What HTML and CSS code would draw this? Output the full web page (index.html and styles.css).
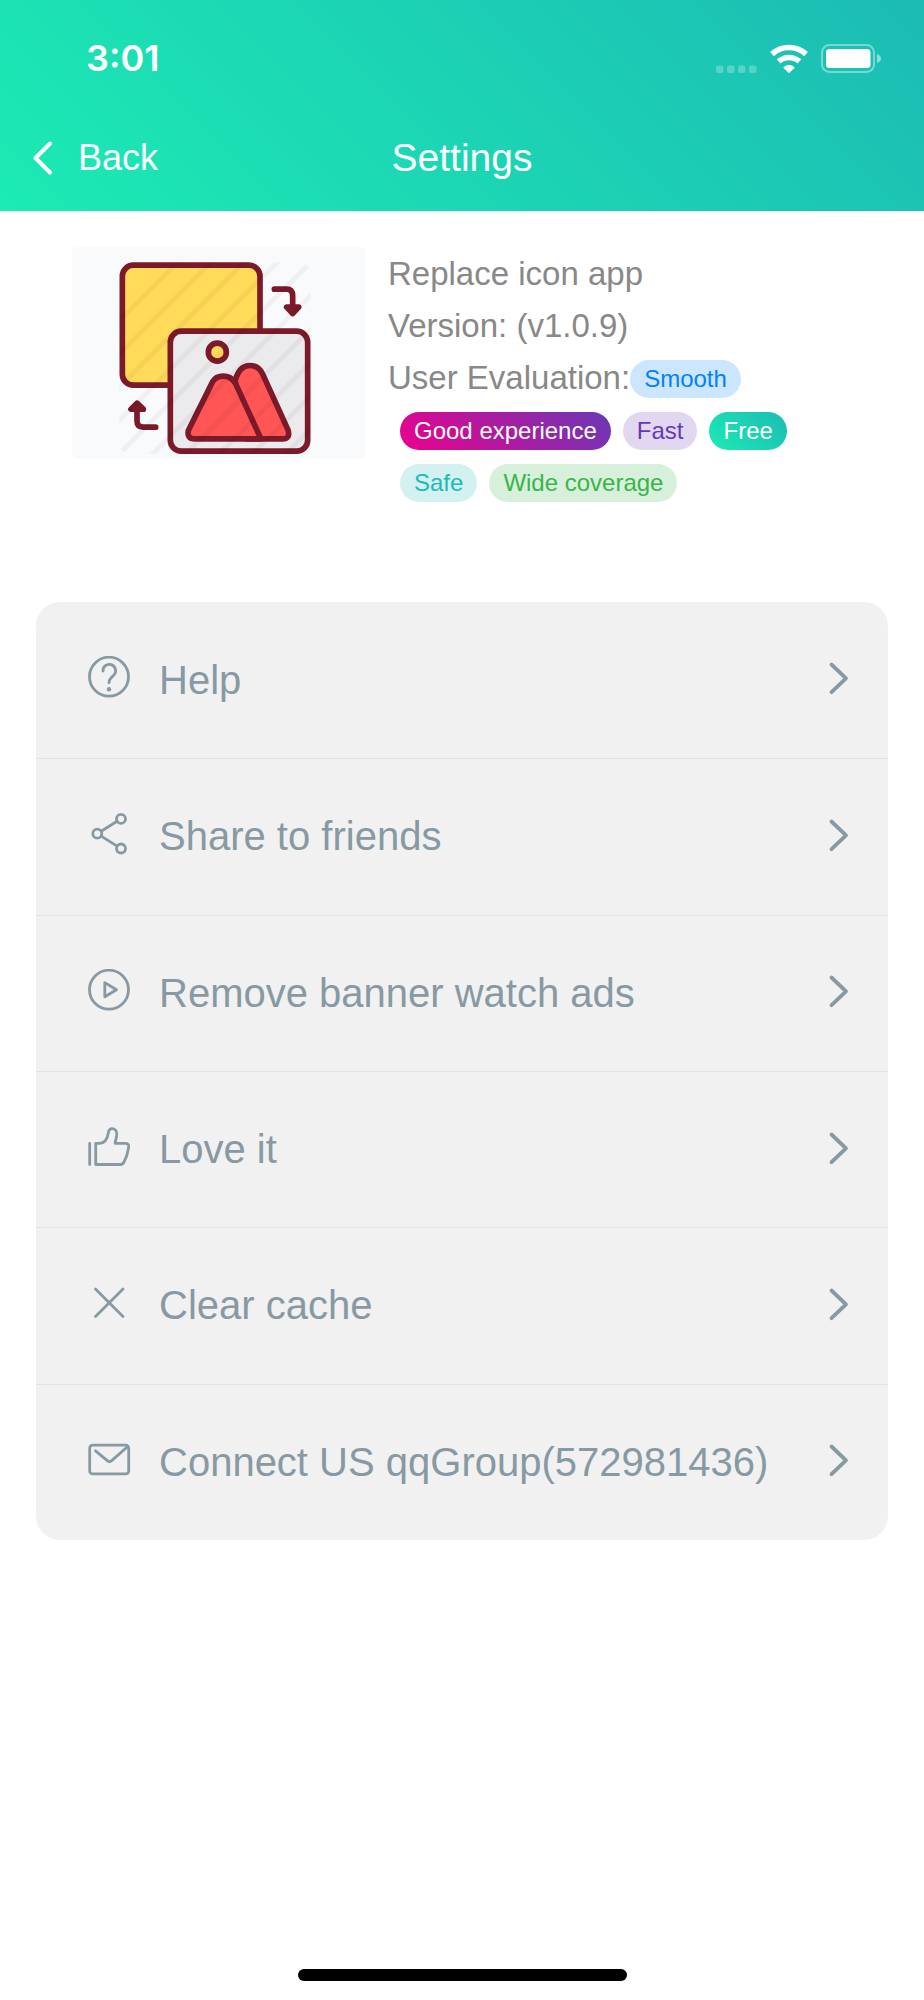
FILE: index.html
```html
<!DOCTYPE html>
<html lang="en">
<head>
<meta charset="utf-8">
<meta name="viewport" content="width=device-width, initial-scale=1">
<title>Settings</title>
<link rel="stylesheet" href="styles.css">
</head>
<body>
<div class="screen">
  <header class="header">
    <div class="status">
      <span class="time">3:01</span>
      <div class="indicators">
        <svg class="signal" width="42" height="29" viewBox="0 0 42 29" aria-hidden="true">
          <g fill="#fff" fill-opacity=".25"><rect x="0" y="21.5" width="7.5" height="7.5" rx="2"/><rect x="11" y="21.5" width="7.5" height="7.5" rx="2"/><rect x="22" y="21.5" width="7.5" height="7.5" rx="2"/><rect x="33" y="21.5" width="7.5" height="7.5" rx="2"/></g>
        </svg>
        <svg class="wifi" width="38" height="29" viewBox="0 0 38 29" aria-hidden="true">
          <path d="M2 10.1A25.4 25.4 0 0 1 36 10.1M8.6 17.4A15.6 15.6 0 0 1 29.4 17.4" fill="none" stroke="#fff" stroke-width="5.6"/>
          <path d="M18.2 28.4L13.2 23.4Q19 18.2 24.8 23.4L19.8 28.4Q19 29.2 18.2 28.4Z" fill="#fff"/>
        </svg>
        <svg class="battery" width="60" height="29" viewBox="0 0 60 29" aria-hidden="true">
          <rect x="1" y="1" width="52" height="27" rx="7.5" fill="none" stroke="#fff" stroke-opacity=".4" stroke-width="2"/>
          <rect x="5" y="5" width="44.5" height="19" rx="3.5" fill="#fff"/>
          <path d="M56 10Q60 11.500 60 14.500Q60 17.500 56 19Z" fill="#fff" fill-opacity=".5"/>
        </svg>
      </div>
    </div>
    <nav class="nav">
      <a class="back" href="#back">
        <svg width="20" height="34" viewBox="0 0 20 34" aria-hidden="true"><path d="M17 2.500L2.500 17L17 31.500" fill="none" stroke="#fff" stroke-width="4" stroke-linecap="round" stroke-linejoin="round"/></svg>
        <span>Back</span>
      </a>
      <h1 class="title">Settings</h1>
    </nav>
  </header>

  <main>
    <section class="about">
      <svg class="picture" viewBox="36 31.500 879 636" role="img" aria-label="App logo">
        <defs>
          <clipPath id="art"><rect x="178" y="78" width="573" height="574" rx="30"/></clipPath>
        </defs>
        <g stroke="#7c1a29" stroke-width="17" stroke-linejoin="round" stroke-linecap="round">
          <rect x="187" y="86" width="413" height="360" rx="33" fill="#ffdb59"/>
          <rect x="331" y="284" width="412" height="360" rx="33" fill="#ebebee"/>
          <circle cx="472" cy="347" r="27" fill="#ffdb59"/>
          <path d="M525 432C535 402 547 387 570 387C590 387 601 398 608 413L684 580Q692 607 668 607H560Z" fill="#ff5555"/>
          <path d="M603 607L526 440Q513 419 490 419Q467 419 457 437L385 582Q380 607 404 607Z" fill="#ff5555"/>
          <path d="M643 158H680Q698 158 698 178V205M287 572H250Q231 572 231 553V525" fill="none"/>
          <path d="M680 212H716L698 231ZM213 518H250L231 500Z" fill="#7c1a29"/>
        </g>
        <g clip-path="url(#art)" stroke="#000" stroke-opacity=".04" stroke-width="15">
          <path d="M130 300L430 0M130 400L530 0M130 500L630 0M130 600L730 0M130 700L830 0M230 700L830 100M330 700L830 200M430 700L830 300M530 700L830 400M630 700L830 500"/>
        </g>
      </svg>
      <div class="info">
        <p>Replace icon app</p>
        <p>Version: (v1.0.9)</p>
        <div class="rating">
          <span>User Evaluation:</span>
          <span class="tag tag-blue">Smooth</span>
          <span class="tag tag-magenta">Good experience</span>
          <span class="tag tag-purple">Fast</span>
          <span class="tag tag-green">Free</span>
          <span class="tag tag-cyan">Safe</span>
          <span class="tag tag-olive">Wide coverage</span>
        </div>
      </div>
    </section>

    <ul class="menu">
      <li><a class="item" href="#help">
        <svg class="icon" viewBox="0 0 48 48" aria-hidden="true"><circle cx="24" cy="20.700" r="19.500"/><path d="M18 15A6.300 6.300 0 1 1 29.200 18.600L26 22Q24 24 24 26.800"/><circle class="dot" cx="24" cy="33.300" r="2.200"/></svg>
        <span class="label">Help</span>
        <svg class="chevron" viewBox="0 0 24 48" aria-hidden="true"><path d="M4.500 8.500L19 22.300L4.500 36.200"/></svg>
      </a></li>
      <li><a class="item" href="#share">
        <svg class="icon" viewBox="0 0 48 48" aria-hidden="true"><circle cx="36" cy="5.900" r="4.500"/><circle cx="12.300" cy="20.700" r="4.500"/><circle cx="36" cy="35.500" r="4.500"/><path d="M16.200 18.300L32.100 8.300M16.200 23.100L32.100 33.100"/></svg>
        <span class="label">Share to friends</span>
        <svg class="chevron" viewBox="0 0 24 48" aria-hidden="true"><path d="M4.500 8.500L19 22.300L4.500 36.200"/></svg>
      </a></li>
      <li><a class="item" href="#ads">
        <svg class="icon" viewBox="0 0 48 48" aria-hidden="true"><circle cx="24" cy="20.700" r="19.500"/><path d="M19.800 13.600V27.800L31.500 20.700Z"/></svg>
        <span class="label">Remove banner watch ads</span>
        <svg class="chevron" viewBox="0 0 24 48" aria-hidden="true"><path d="M4.500 8.500L19 22.300L4.500 36.200"/></svg>
      </a></li>
      <li><a class="item" href="#love">
        <svg class="icon" viewBox="0 0 48 48" aria-hidden="true"><path d="M4.700 17.500V38.500M10.700 17.300H14.500C20 17.300 22.500 12 23.300 7C23.700 4 24.700 2.700 27 2.700C30 2.700 31.800 5 31.800 8C31.800 11.500 30.500 14 30 17.300H41C43.300 17.300 44 19 43.600 21.500C42.800 27 41.500 31.500 39 36Q37.700 38.500 35.500 38.500H10.700Z"/></svg>
        <span class="label">Love it</span>
        <svg class="chevron" viewBox="0 0 24 48" aria-hidden="true"><path d="M4.500 8.500L19 22.300L4.500 36.200"/></svg>
      </a></li>
      <li><a class="item" href="#clear">
        <svg class="icon" viewBox="0 0 48 48" aria-hidden="true"><path d="M10.500 7L38 34.500M38 7L10.500 34.500"/></svg>
        <span class="label">Clear cache</span>
        <svg class="chevron" viewBox="0 0 24 48" aria-hidden="true"><path d="M4.500 8.500L19 22.300L4.500 36.200"/></svg>
      </a></li>
      <li><a class="item" href="#contact">
        <svg class="icon" viewBox="0 0 48 48" aria-hidden="true"><rect x="4.700" y="7.200" width="39" height="28.700" rx="3"/><path d="M10.500 12.800L22.300 22.600Q24.500 24.300 26.700 22.600L42.800 8.500"/></svg>
        <span class="label">Connect US qqGroup(572981436)</span>
        <svg class="chevron" viewBox="0 0 24 48" aria-hidden="true"><path d="M4.500 8.500L19 22.300L4.500 36.200"/></svg>
      </a></li>
    </ul>
  </main>

  <div class="home-bar"></div>
</div>
</body>
</html>
```
FILE: styles.css
```css
* {
  box-sizing: border-box;
}

body {
  margin: 0;
  background: #fff;
  font-family: "Liberation Sans", Arial, sans-serif;
}

.screen {
  display: flex;
  flex-direction: column;
  min-height: 100vh;
}

a {
  color: inherit;
  text-decoration: none;
}

/* Header */
.header {
  background: linear-gradient(45deg, #1cebb4, #1cbbb4);
  color: #fff;
}

.status {
  display: flex;
  align-items: center;
  justify-content: space-between;
  height: 104px;
  padding: 12px 43px 0 86px;
}

.time {
  font-family: Inter, sans-serif;
  font-size: 36px;
  font-weight: 600;
}

.indicators {
  display: flex;
  align-items: center;
}

.wifi {
  margin: 0 13px 0 12px;
}

.nav {
  display: grid;
  grid-template-columns: 1fr auto 1fr;
  align-items: center;
  height: 107px;
  padding: 0 33px;
}

.back {
  display: flex;
  align-items: center;
  gap: 25px;
  font-size: 36px;
}

.title {
  margin: 0;
  font-size: 39px;
  font-weight: 400;
}

/* App summary */
.about {
  display: flex;
  align-items: flex-start;
  gap: 23px;
  padding: 36px 72px 0;
}

.picture {
  flex: none;
  width: 293px;
  height: 212px;
  border-radius: 5px;
  background: #f8fafc;
}

.info {
  flex: 1;
  padding-top: 1px;
  color: #888;
  font-size: 33px;
  line-height: 52px;
}

.info p {
  margin: 0;
}

.rating {
  display: flex;
  flex-wrap: wrap;
  align-items: center;
}

.tag {
  margin: 8px 0 6px 12px;
  padding: 0 14px;
  border-radius: 19px;
  font-size: 24px;
  line-height: 38px;
  white-space: nowrap;
}

.tag-blue {
  margin-left: 0;
  background: #cce6ff;
  color: #0081ff;
}

.tag-magenta {
  background: linear-gradient(45deg, #ec008c, #6739b6);
  color: #fff;
}

.tag-purple {
  background: #e1d7f0;
  color: #6739b6;
}

.tag-green {
  background: linear-gradient(45deg, #1cebb4, #1cbbb4);
  color: #fff;
}

.tag-cyan {
  background: #d2f1f0;
  color: #1cbbb4;
}

.tag-olive {
  background: #d7f0db;
  color: #39b54a;
}

/* Menu */
.menu {
  display: grid;
  grid-auto-rows: 1fr;
  min-height: 938px;
  margin: 94px 36px 0;
  padding: 0;
  border-radius: 24px;
  background: #f1f1f1;
  color: #8799a3;
  font-size: 40px;
  list-style: none;
}

.menu li {
  display: grid;
}

.menu li + li {
  border-top: 1px solid #e2e2e2;
}

.item {
  display: flex;
  align-items: center;
  padding: 0 37px 0 49px;
}

.label {
  flex: 1;
  margin-left: 26px;
}

.icon,
.chevron {
  flex: none;
  height: 48px;
  fill: none;
  stroke: currentColor;
  stroke-linecap: round;
  stroke-linejoin: round;
}

.icon {
  width: 48px;
  stroke-width: 2.8;
}

.icon .dot {
  fill: currentColor;
  stroke: none;
}

.chevron {
  width: 24px;
  stroke-width: 3.8;
}

/* Home indicator */
.home-bar {
  align-self: center;
  width: 36%;
  max-width: 329px;
  height: 12px;
  margin: auto 0 19px;
  border-radius: 6px;
  background: #000;
}
```
